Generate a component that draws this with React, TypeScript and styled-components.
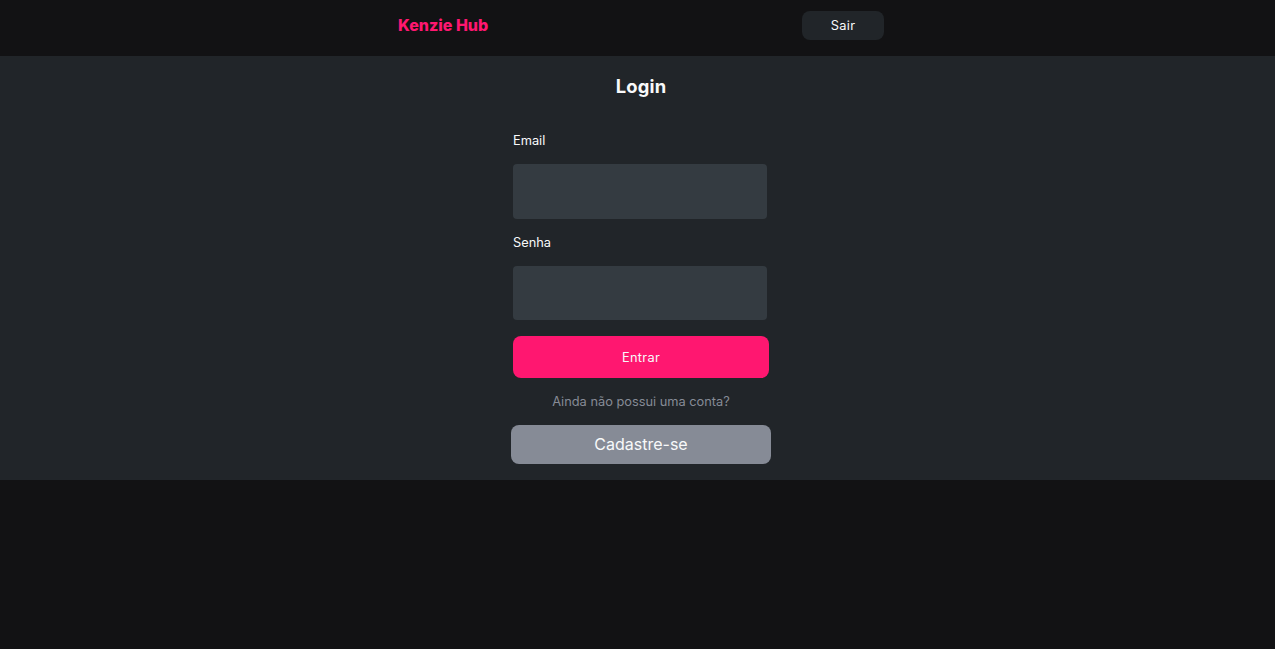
import styled, { createGlobalStyle } from "styled-components"

const App = () => {
  return (
    <>
      <GlobalStyle />

      <Header>
        <Logo>Kenzie Hub</Logo>
        <LogoutButton type="button">Sair</LogoutButton>
      </Header>

      <Main>
        <Title>Login</Title>

        <Form>
          <Label htmlFor="email">Email</Label>
          <Input id="email" type="email" />

          <Label htmlFor="password">Senha</Label>
          <Input id="password" type="password" />

          <SubmitButton type="submit">Entrar</SubmitButton>
        </Form>

        <Hint>Ainda não possui uma conta?</Hint>
        <RegisterLink href="#">Cadastre-se</RegisterLink>
      </Main>
    </>
  )
}

const GlobalStyle = createGlobalStyle`
  * {
    margin: 0;
    padding: 0;
    box-sizing: border-box;
  }

  body {
    background-color: #121214;
    color: #f8f9fa;
    font-family: "Inter", sans-serif;
  }

  button, input {
    border: none;
    font-family: inherit;
  }
`

const Header = styled.header`
  display: flex;
  justify-content: space-between;
  width: 486px;
  height: 56px;
  margin-left: 398px;
  padding-top: 11px;
`

const Logo = styled.h1`
  color: #ff1770;
  font-size: 16px;
  line-height: 29px;
  font-weight: 800;
`

const LogoutButton = styled.button`
  width: 82px;
  height: 29px;
  border-radius: 8px;
  background-color: #212529;
  color: #f8f9fa;
  font-size: 12.8px;
  letter-spacing: 0.3px;
`

const Main = styled.main`
  display: flex;
  flex-direction: column;
  align-items: center;
  height: 424px;
  padding: 19px 0 16px 7px;
  background-color: #212529;
`

const Title = styled.h2`
  font-size: 18.4px;
  line-height: 22px;
  font-weight: 700;
  letter-spacing: 0.2px;
`

const Form = styled.form`
  display: flex;
  flex-direction: column;
  width: 256px;
  margin-top: 36.4px;
`

const Label = styled.label`
  font-size: 12.8px;
  line-height: 16px;
`

const Input = styled.input`
  width: 254px;
  height: 54.4px;
  margin: 15px 0 16px;
  padding: 0 16px;
  border-radius: 4px;
  background-color: #343b41;
  color: #f8f9fa;
`

const SubmitButton = styled.button`
  height: 42px;
  padding-top: 1px;
  border-radius: 8px;
  background-color: #ff1770;
  color: #f8f9fa;
  font-size: 12.8px;
  letter-spacing: 0.3px;
`

const Hint = styled.p`
  margin: 16px 0 15px;
  color: #868b96;
  font-size: 12.8px;
  line-height: 16px;
`

const RegisterLink = styled.a`
  width: 260px;
  height: 39px;
  border-radius: 8px;
  background-color: #868b96;
  color: #f8f9fa;
  font-size: 16px;
  line-height: 39px;
  text-align: center;
  text-decoration: none;
`

export default App
